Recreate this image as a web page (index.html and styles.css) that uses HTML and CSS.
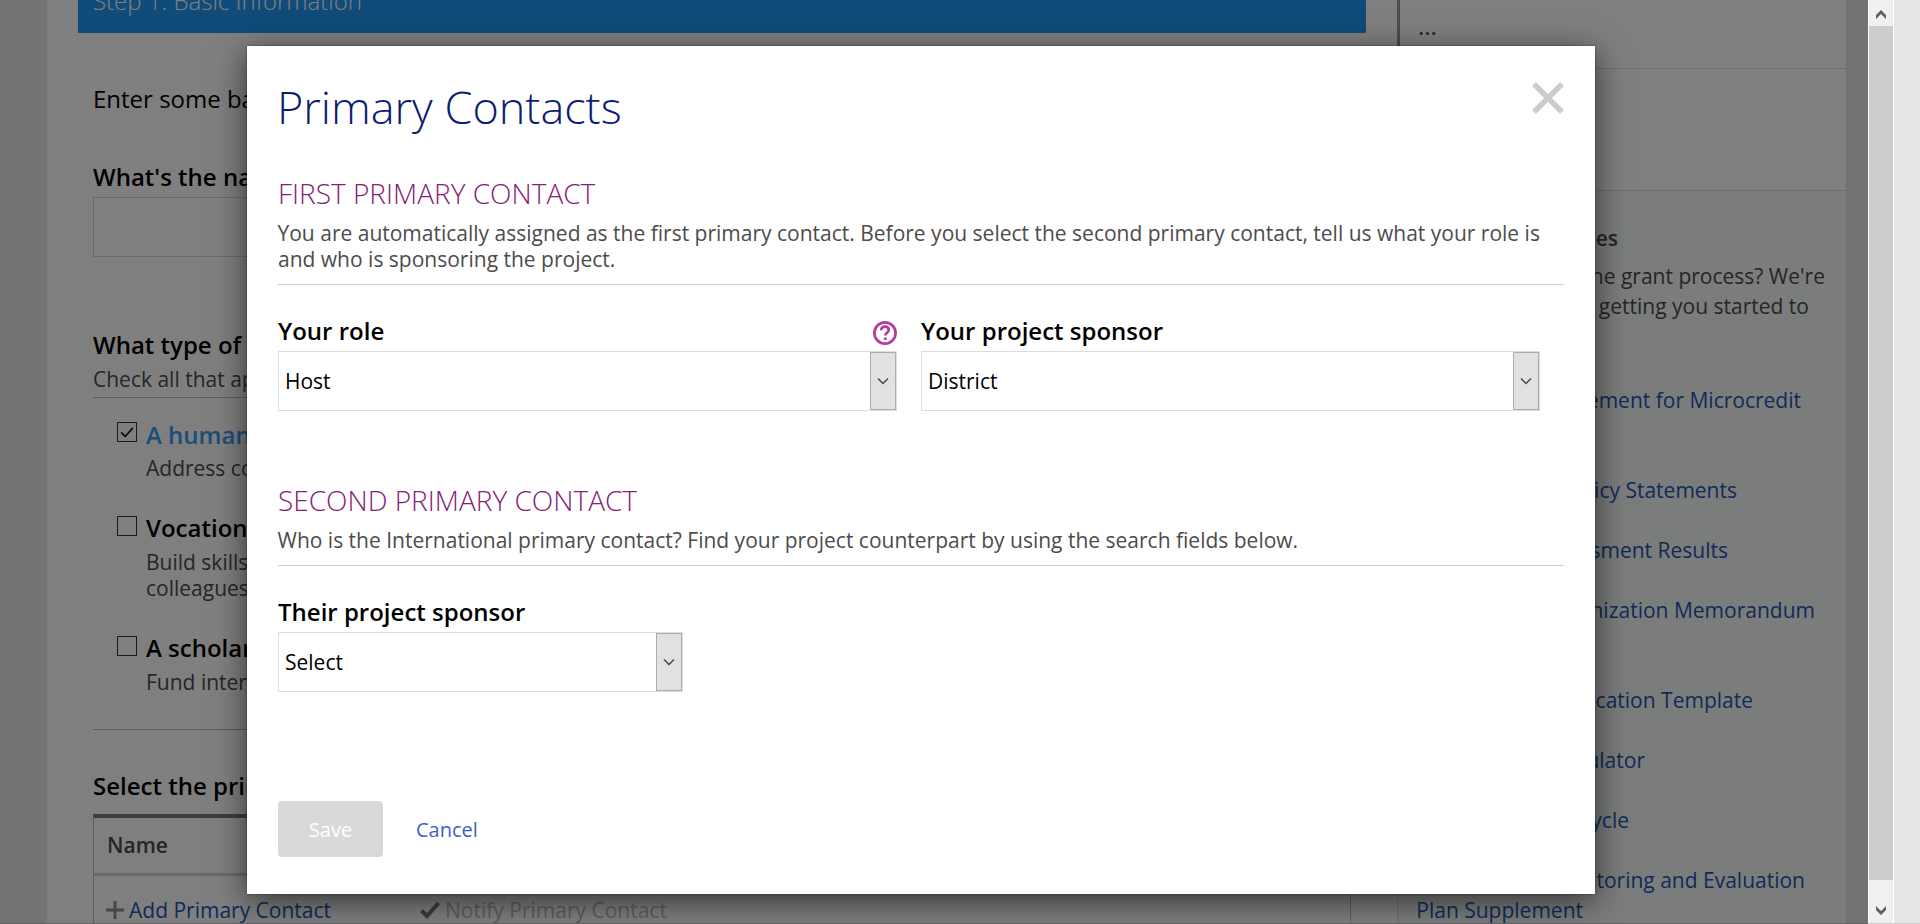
FILE: index.html
```html
<!DOCTYPE html>
<html lang="en">
<head>
<meta charset="utf-8">
<title>Primary Contacts</title>
<link rel="stylesheet" href="styles.css">
</head>
<body>
<div class="page">
  <main class="content">
    <div class="step-bar">Step 1: Basic Information</div>
    <div class="form">
      <p class="intro">Enter some basic</p>
      <p class="question name-question">What's the name</p>
      <div class="text-input"></div>
      <p class="question type-question">What type of</p>
      <p class="hint">Check all that apply</p>
      <div class="options">
        <div class="option checked">
          <span class="box"><svg viewBox="0 0 20 20"><path d="M3.5 10.5 8 15 16.5 5.5"/></svg></span>
          <div><p class="option-title">A humanitarian</p><p class="option-text">Address com</p></div>
        </div>
        <div class="option">
          <span class="box"></span>
          <div><p class="option-title">Vocational</p><p class="option-text">Build skills<br>colleagues</p></div>
        </div>
        <div class="option">
          <span class="box"></span>
          <div><p class="option-title">A scholarship</p><p class="option-text">Fund intern</p></div>
        </div>
      </div>
      <p class="question contacts-question">Select the prim</p>
      <div class="table">
        <div class="table-head">Name</div>
        <div class="table-actions">
          <a class="add"><svg viewBox="0 0 18 18"><path d="M9 0V18M0 9H18"/></svg>Add Primary Contact</a>
          <a class="notify"><svg viewBox="0 0 20 18"><path d="M1.5 9.5 7 15 18.5 2"/></svg>Notify Primary Contact</a>
        </div>
      </div>
    </div>
  </main>
  <aside class="sidebar">
    <div class="side-top">...</div>
    <div class="side-gap"></div>
    <div class="resources">
      <p class="res-title">Resources</p>
      <p class="res-line l1">the grant process? We're</p>
      <p class="res-line l2">getting you started to</p>
      <a class="res-link k1">Supplement for Microcredit</a>
      <a class="res-link k2">Policy Statements</a>
      <a class="res-link k3">Assessment Results</a>
      <a class="res-link k4">Organization Memorandum</a>
      <a class="res-link k5">Application Template</a>
      <a class="res-link k6">Calculator</a>
      <a class="res-link k7">Lifecycle</a>
      <a class="res-link k8">Monitoring and Evaluation</a>
      <a class="res-link k9">Plan Supplement</a>
    </div>
  </aside>
  <div class="gutter"></div>
  <div class="scrollbar">
    <svg viewBox="0 0 12 12"><path d="M1 10V6L6 1l5 5v4L6 5Z"/></svg>
    <div class="thumb"></div>
    <svg class="down" viewBox="0 0 12 12"><path d="M1 1V5L6 10l5-5V1L6 6Z"/></svg>
  </div>
  <div class="edge"></div>
</div>
<div class="overlay"></div>
<section class="modal">
  <header class="modal-head">
    <h1>Primary Contacts</h1>
    <svg class="close" viewBox="0 0 32 32"><path d="M2 2 30 30M30 2 2 30"/></svg>
  </header>
  <h2>FIRST PRIMARY CONTACT</h2>
  <p class="lead">You are automatically assigned as the first primary contact. Before you select the second primary contact, tell us what your role is<br>and who is sponsoring the project.</p>
  <div class="fields">
    <div class="field">
      <div class="label">Your role
        <svg class="help" viewBox="0 0 24 24"><circle cx="12" cy="12" r="10.6"/><path d="M8.2 9.2C8.3 6.9 9.900 5.700 12 5.700s3.800 1.200 3.800 3.300c0 2.500-3.500 2.700-3.500 5.400M12.300 16.500v2.600"/></svg>
      </div>
      <div class="select"><span>Host</span><i><svg viewBox="0 0 12 8"><path d="M1 1.500 6 6.500l5-5"/></svg></i></div>
    </div>
    <div class="field">
      <div class="label">Your project sponsor</div>
      <div class="select"><span>District</span><i><svg viewBox="0 0 12 8"><path d="M1 1.500 6 6.500l5-5"/></svg></i></div>
    </div>
  </div>
  <h2 class="second">SECOND PRIMARY CONTACT</h2>
  <p class="lead">Who is the International primary contact? Find your project counterpart by using the search fields below.</p>
  <div class="fields">
    <div class="field narrow">
      <div class="label">Their project sponsor</div>
      <div class="select"><span>Select</span><i><svg viewBox="0 0 12 8"><path d="M1 1.500 6 6.500l5-5"/></svg></i></div>
    </div>
  </div>
  <footer class="buttons"><span class="save">Save</span><a class="cancel">Cancel</a></footer>
</section>
</body>
</html>
```
FILE: styles.css
```css
* { box-sizing: border-box; }
body { margin: 0; width: 1920px; height: 924px; overflow: hidden; position: relative; background: #e6e6e6; font-family: "Open Sans", "Noto Sans", sans-serif; font-size: 21px; line-height: 26px; color: #4c4c4c; }
p, h1, h2 { margin: 0; white-space: nowrap; }
svg { fill: none; display: block; flex: none; }
.page { display: flex; height: 924px; overflow: hidden; border-bottom: 1px solid #ccc; }
.content { width: 1350px; margin-left: 47px; padding-left: 31px; background: #fff; flex: none; }
.step-bar { width: 1288px; height: 33px; background: #2196f3; color: #fff; font-weight: 300; font-size: 24px; line-height: 32px; padding-left: 15px; overflow: hidden; display: flex; align-items: flex-end; padding-bottom: 16px; }
.form { padding-left: 15px; width: 1273px; }
.intro, .question { font-size: 24px; line-height: 30px; color: #000; }
.intro { margin-top: 51px; }
.question { font-weight: 600; }
.name-question { margin-top: 48px; }
.text-input { height: 60px; margin-top: 5px; border: 1px solid #d5d5d5; }
.type-question { margin-top: 73px; }
.hint { margin-top: 6px; padding-bottom: 5px; border-bottom: 1px solid #bbb; height: 32px; }
.options { height: 332px; border-bottom: 1px solid #bbb; padding: 22px 0 0 24px; }
.option { display: flex; gap: 9px; height: 93px; }
.option + .option + .option { margin-top: 27px; }
.box { width: 20px; height: 20px; border: 1.500px solid #333; margin-top: 3px; flex: none; }
.checked .box { margin-top: 2px; }
.box svg { width: 18px; height: 18px; stroke: #222; stroke-width: 2; }
.option-title { font-size: 24px; line-height: 30px; font-weight: 600; color: #000; }
.checked .option-title { color: #3b99f5; }
.option-text { margin-top: 6px; }
.checked .option-text { margin-top: 5px; }
.contacts-question { margin-top: 41px; }
.table { width: 1258px; height: 120px; margin-top: 13px; border: 1px solid #bbb; border-top: 4px solid #777b77; }
.table-head { height: 58px; border-bottom: 3px solid #d5d5d5; padding: 14px 0 0 13px; font-weight: 600; }
.table-actions { display: flex; padding: 21px 0 0 12px; }
.table-actions a { display: flex; align-items: center; gap: 5px; }
.table-actions .add { width: 314px; color: #2555b0; }
.add svg { width: 18px; height: 18px; stroke: #8c8c8c; stroke-width: 3; }
.notify { color: #bbb; }
.notify svg { width: 20px; height: 18px; stroke: #777; stroke-width: 4; }
.sidebar { width: 450px; flex: none; background: #fff; border-right: 1px solid #ddd; }
.side-top { height: 69px; border-left: 3px solid #999; border-bottom: 1px solid #ddd; padding: 13px 0 0 18px; font-size: 24px; }
.side-gap { height: 122px; border-bottom: 1px solid #ddd; }
.resources { height: 733px; background: #f7faf8; border-left: 1px solid #ddd; padding-top: 32px; line-height: 30px; display: flex; flex-direction: column; align-items: flex-end; white-space: nowrap; }
.res-title { font-weight: 600; padding-right: 228px; }
.res-line.l1 { margin-top: 8px; padding-right: 21px; }
.l2 { padding-right: 37px; }
.res-link { color: #2555b0; }
.k1 { margin-top: 64px; padding-right: 45px; }
.k2 { margin-top: 60px; padding-right: 109px; }
.k3 { margin-top: 30px; padding-right: 118px; }
.k4 { margin-top: 30px; padding-right: 31px; }
.k5 { margin-top: 60px; padding-right: 93px; }
.k6 { margin-top: 30px; padding-right: 201px; }
.k7 { margin-top: 30px; padding-right: 217px; }
.k8 { margin-top: 30px; padding-right: 41px; }
.k9 { padding-right: 263px; }
.gutter { width: 21px; background: #e6e6e6; flex: none; }
.scrollbar { width: 26px; flex: none; background: #f0f0f0; border-left: 1px solid #fff; border-right: 1px solid #fff; display: flex; flex-direction: column; align-items: center; padding: 9px 0 6px; }
.scrollbar svg { width: 12px; height: 12px; fill: #606060; }
.thumb { width: 24px; height: 855px; margin-top: 5px; background: #cdcdcd; }
.scrollbar .down { margin-top: 25px; }
.edge { flex: 1; background: #e6e6e6; }
.overlay { position: absolute; left: 0; top: 0; width: 1868px; height: 924px; background: rgba(0,0,0,.5); }
.modal { position: absolute; left: 247px; top: 46px; width: 1348px; height: 848px; background: #fff; padding: 30px 31px 0; box-shadow: 0 7px 30px rgba(0,0,0,.6), 0 0 2px rgba(0,0,0,.4); }
.modal-head { display: flex; justify-content: space-between; align-items: flex-start; height: 97px; }
h1 { font-size: 45px; line-height: 62px; font-weight: 300; color: #0c1c72; margin-left: -1px; }
.close { width: 32px; height: 32px; margin: 6px 0 0; stroke: #ccc; stroke-width: 5.500; }
h2 { font-size: 28px; line-height: 40px; font-weight: 300; color: #872175; }
.lead { padding: 7px 0 12px; border-bottom: 1px solid #ccc; text-indent: -.5px; }
.fields { display: flex; gap: 24px; margin-top: 31px; }
.field { width: 619px; }
.field.narrow { width: 405px; }
.label { font-size: 24px; line-height: 30px; font-weight: 600; color: #000; display: flex; justify-content: space-between; align-items: center; height: 35px; padding-bottom: 5px; }
.help { width: 24px; height: 24px; stroke: #b43c9c; stroke-width: 2.700; position: relative; top: 2px; }
.select { display: flex; height: 60px; border: 1px solid #ddd; color: #000; justify-content: space-between; align-items: center; padding-left: 6px; }
.select i { width: 26px; height: 58px; background: #e1e1e1; border: 1px solid #adadad; display: flex; align-items: center; justify-content: center; }
.select svg { width: 12px; height: 8px; stroke: #444; stroke-width: 1.400; margin-right: 1px; }
.second { margin-top: 69px; }
.buttons { display: flex; align-items: center; gap: 33px; margin-top: 109px; }
.save { width: 105px; height: 56px; line-height: 58px; text-align: center; background: #d9d9d9; color: #fff; border-radius: 4px; font-size: 20px; }
.cancel { color: #3a62c8; font-size: 20px; padding-top: 2px; }
```
